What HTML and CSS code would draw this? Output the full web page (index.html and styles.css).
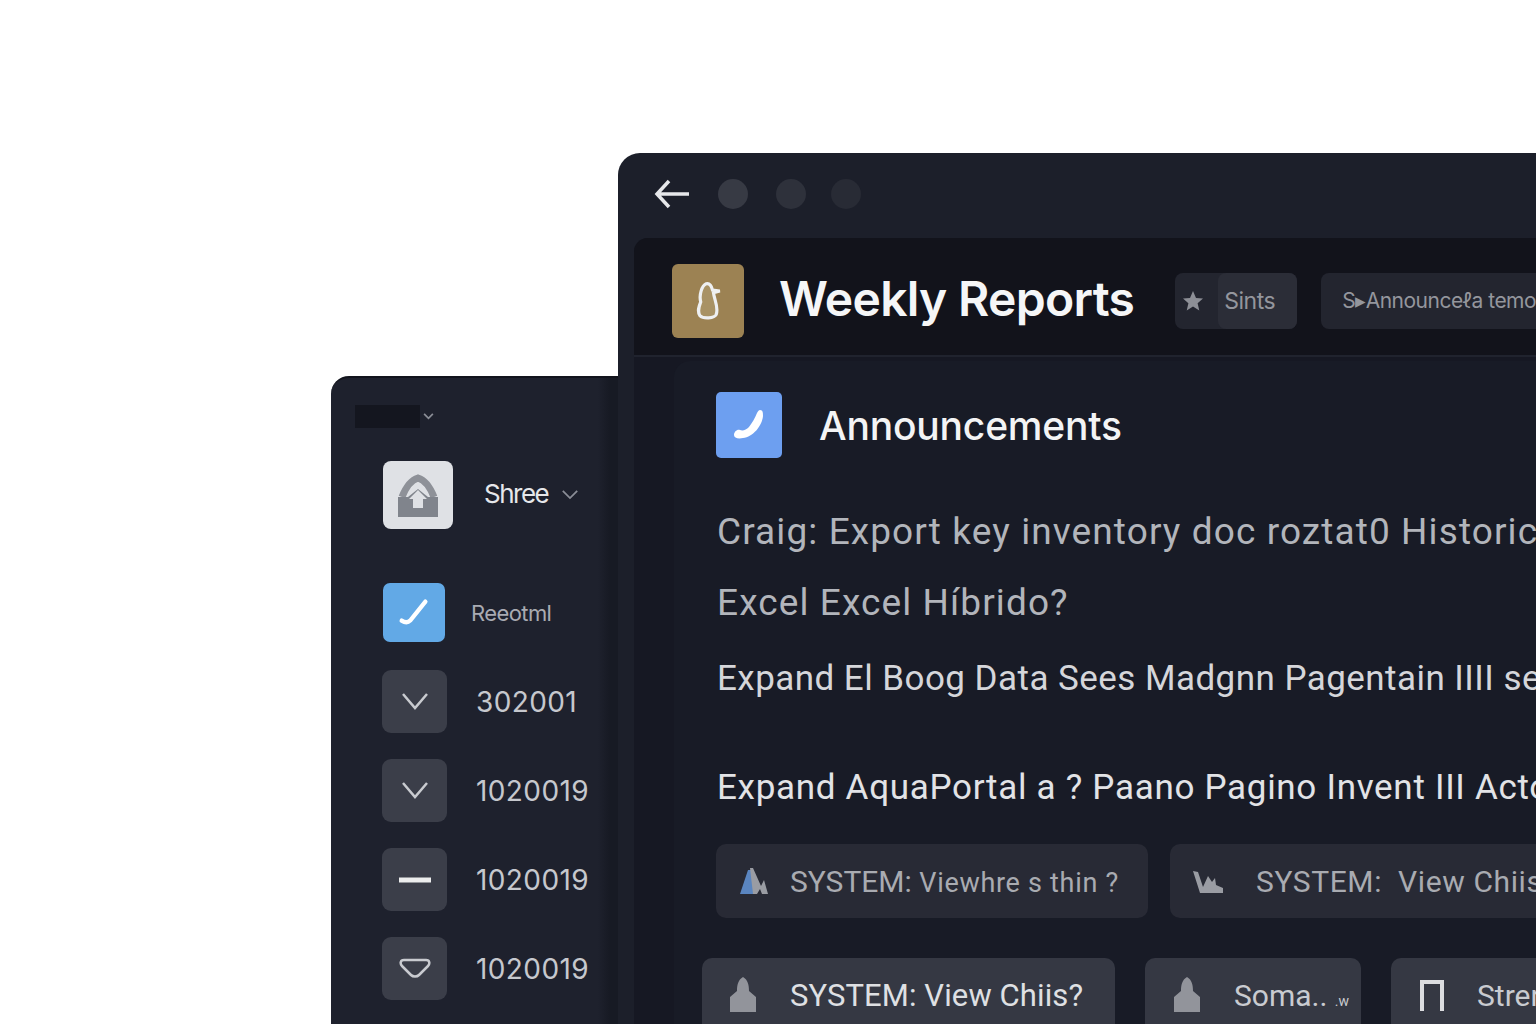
FILE: index.html
```html
<!DOCTYPE html>
<html lang="en">
<head>
  <meta charset="UTF-8">
  <title>Weekly Reports</title>
  <link rel="stylesheet" href="styles.css">
</head>
<body>
  <!-- Back window -->
  <div class="window window-back">
    <div class="side-top">
      <span class="side-dark"></span>
      <svg class="tiny-chevron" viewBox="0 0 12 8"><path d="M1 1l5 5 5-5"/></svg>
    </div>
    <div class="store-row">
      <div class="store-logo">
        <svg viewBox="0 0 40 44" width="40" height="44">
          <path class="home-roof" d="M4 24C8 14 13 7 20 5c7 2 12 9 16 19"/>
          <path class="home-base" d="M0 24h10l10-8 10 8h10v20H0z"/>
          <path class="home-arrow" d="M20 17l9 9h-4v9H15v-9h-4z"/>
        </svg>
      </div>
      <span class="store-name">Shree</span>
      <svg class="store-chevron" viewBox="0 0 20 12"><path d="M2 2l8 8 8-8"/></svg>
    </div>
    <div class="report-row">
      <div class="report-check">
        <svg viewBox="0 0 40 40" width="38" height="38"><path d="M7 28c3 2 6 3 9 0L32 8"/></svg>
      </div>
      <span class="report-name">Reeotml</span>
    </div>
    <div class="side-list">
      <div class="side-item">
        <div class="side-icon"><svg viewBox="0 0 32 32"><path d="M4 8l12 14L28 8"/></svg></div>
        <span class="side-num">302001</span>
      </div>
      <div class="side-item">
        <div class="side-icon"><svg viewBox="0 0 32 32"><path d="M4 8l12 14L28 8"/></svg></div>
        <span class="side-num">1020019</span>
      </div>
      <div class="side-item">
        <div class="side-icon"><svg viewBox="0 0 32 32"><path class="thick" d="M0 16h32"/></svg></div>
        <span class="side-num">1020019</span>
      </div>
      <div class="side-item">
        <div class="side-icon"><svg viewBox="0 0 32 32"><path d="M5 7h22c4 0 4 4 2 6l-9 9c-2 2-6 2-8 0l-9-9C1 11 1 7 5 7z"/></svg></div>
        <span class="side-num">1020019</span>
      </div>
    </div>
  </div>

  <!-- Front window -->
  <div class="window window-front">
    <div class="titlebar">
      <svg class="back-arrow" viewBox="0 0 36 30"><path d="M35 15H3M15 2 3 15l12 13"/></svg>
      <span class="dot dot-1"></span>
      <span class="dot dot-2"></span>
      <span class="dot dot-3"></span>
    </div>
    <div class="content">
      <div class="page-head">
        <div class="page-logo">
          <svg viewBox="0 0 30 44" width="30" height="40"><path d="M13 3c4-1 6 3 7 7l8 1-7 2c1 8 6 16 3 24-2 4-14 5-18 1-3-5-1-10 1-15C5 16 8 5 13 3z"/></svg>
        </div>
        <h1>Weekly Reports</h1>
        <div class="chip chip-star">
          <svg viewBox="0 0 24 24" width="24" height="24"><path d="M12 2l3 7 7 .6-5.400 4.600 1.700 7.200L12 17.600l-6.300 3.800 1.700-7.200L2 9.600 9 9z"/></svg>
          <span class="chip-inner">Sints</span>
        </div>
        <div class="chip chip-wide">S▸Announceℓa temo</div>
      </div>
      <div class="panel">
        <div class="panel-head">
          <div class="panel-icon">
            <svg viewBox="0 0 34 32" width="34" height="32"><path d="M28 1c3 0 3 3 3 6-1 10-10 21-20 22-5 1-9 0-9-3 0-3 3-6 6-5 3 1 6 0 9-3 3-4 6-9 8-14 1-2 2-3 3-3z"/></svg>
          </div>
          <h2>Announcements</h2>
        </div>
        <p class="line line-1">Craig: Export key inventory doc roztat0 Historic</p>
        <p class="line line-2">Excel Excel Híbrido?</p>
        <p class="line line-3">Expand El Boog Data Sees Madgnn Pagentain IIII se</p>
        <p class="line line-4">Expand AquaPortal a ? Paano Pagino Invent III Acto</p>
        <div class="btn-row btn-row-1">
          <div class="sys-btn sys-a">
            <svg viewBox="0 0 40 30" width="40" height="30"><path class="fill-blue" d="M1 28 9 4h3l3 24z"/><path class="fill-gray" d="M11 2h3l8 18 3-6 4 14h-6l-2-5-3 5h-4z"/></svg>
            <span class="sys-text">SYSTEM: <span class="sys-dim">Viewhre s thin ?</span></span>
          </div>
          <div class="sys-btn sys-b">
            <svg viewBox="0 0 34 24" width="34" height="24"><path class="fill-gray" d="M1 2l5 1 5 15 5-11 4 6 3-4 1 7 7 3v5H8z"/></svg>
            <span class="sys-text sys-spaced">SYSTEM:&nbsp; View Chiis</span>
          </div>
        </div>
        <div class="btn-row btn-row-2">
          <div class="sys-btn sys-c">
            <svg class="person" viewBox="0 0 30 36" width="30" height="36"><path d="M15 0c5 3 6 8 6 14l7 6v15H2V20l7-6C9 8 10 3 15 0z"/></svg>
            <span class="sys-text sys-bright">SYSTEM: View Chiis?</span>
          </div>
          <div class="sys-btn sys-d">
            <svg class="person" viewBox="0 0 30 36" width="30" height="36"><path d="M15 0c5 3 6 8 6 14l7 6v15H2V20l7-6C9 8 10 3 15 0z"/></svg>
            <span class="sys-text sys-small">Soma.. <span class="sys-tiny">.w</span></span>
          </div>
          <div class="sys-btn sys-e">
            <svg class="gate" viewBox="0 0 26 32" width="26" height="32"><path d="M3 32V3h20v29"/></svg>
            <span class="sys-text sys-small">Strer</span>
          </div>
        </div>
      </div>
    </div>
  </div>
</body>
</html>
```

FILE: styles.css
```css
* {
  margin: 0;
  padding: 0;
  box-sizing: border-box;
}

html, body {
  height: 100%;
}

body {
  position: relative;
  background-color: #fff;
  overflow: hidden;
  font-family: Inter, "Liberation Sans", sans-serif;
}

svg {
  display: block;
  flex-shrink: 0;
}

/* Windows */
.window {
  position: absolute;
  overflow: hidden;
}

.window-back {
  left: 331px;
  top: 376px;
  width: 290px;
  height: 648px;
  background: linear-gradient(to right, #1e212d 92%, #171a24 96%);
  border-radius: 18px 0 0 0;
  border-top: 2px solid #12141c;
  padding: 27px 0 0 24px;
}

.window-front {
  left: 618px;
  top: 153px;
  width: 918px;
  height: 871px;
  background-color: #1c1f2a;
  border-radius: 22px 0 0 0;
}

/* Back window */
.side-top {
  display: flex;
  align-items: center;
  gap: 3px;
  height: 23px;
}

.side-dark {
  width: 65px;
  height: 23px;
  background-color: #14161f;
}

.tiny-chevron {
  width: 11px;
  height: 7px;
}

.tiny-chevron path,
.store-chevron path {
  fill: none;
  stroke: #8a8d96;
  stroke-width: 2;
}

.store-row {
  display: flex;
  align-items: center;
  margin: 33px 0 0 28px;
  height: 68px;
}

.store-logo {
  width: 70px;
  height: 68px;
  flex-shrink: 0;
  background-color: #dfe1e5;
  border-radius: 8px;
  display: flex;
  align-items: center;
  justify-content: center;
}

.home-roof {
  fill: none;
  stroke: #8e9198;
  stroke-width: 7;
}

.home-base {
  fill: #80848c;
}

.home-arrow {
  fill: #dfe1e5;
}

.store-name {
  margin: 0 0 4px 31px;
  font-size: 26px;
  color: #e6e7ea;
  letter-spacing: -1.500px;
}

.store-chevron {
  width: 18px;
  height: 11px;
  margin: 0 0 2px 13px;
}

.report-row {
  display: flex;
  align-items: center;
  margin: 54px 0 0 28px;
  height: 59px;
}

.report-check {
  width: 62px;
  height: 59px;
  flex-shrink: 0;
  background-color: #62a9e6;
  border-radius: 7px;
  display: flex;
  align-items: center;
  justify-content: center;
}

.report-check path {
  fill: none;
  stroke: #fff;
  stroke-width: 4.500;
  stroke-linecap: round;
}

.report-name {
  margin-left: 26px;
  font-size: 22px;
  color: #a9abb2;
  letter-spacing: -0.6px;
}

.side-list {
  display: flex;
  flex-direction: column;
  margin-top: 28px;
}

.side-item {
  display: flex;
  align-items: center;
  height: 89px;
  margin-left: 27px;
  padding-bottom: 26px;
}

.side-icon {
  width: 65px;
  height: 63px;
  flex-shrink: 0;
  background-color: #3b3e49;
  border-radius: 9px;
  display: flex;
  align-items: center;
  justify-content: center;
}

.side-icon svg {
  width: 32px;
  height: 32px;
}

.side-icon path {
  fill: none;
  stroke: #c9cbd0;
  stroke-width: 2.500;
}

.side-icon path.thick {
  stroke: #eceded;
  stroke-width: 5;
}

.side-num {
  margin-left: 29px;
  font-size: 28px;
  color: #c6c8cd;
  letter-spacing: 0.4px;
}

/* Front window */
.titlebar {
  display: flex;
  align-items: center;
  height: 85px;
  padding: 0 0 4px 36px;
}

.back-arrow {
  width: 36px;
  height: 30px;
}

.back-arrow path {
  fill: none;
  stroke: #e6e7ea;
  stroke-width: 3.500;
}

.dot {
  width: 30px;
  height: 30px;
  border-radius: 50%;
}

.dot-1 {
  margin-left: 28px;
  background-color: #373a44;
}

.dot-2 {
  margin-left: 28px;
  background-color: #2e313b;
}

.dot-3 {
  margin-left: 25px;
  background-color: #282b35;
}

.content {
  height: 786px;
  margin-left: 16px;
  background-color: #161823;
  border-radius: 14px 0 0 0;
}

.page-head {
  display: flex;
  align-items: center;
  height: 119px;
  padding: 8px 0 0 38px;
  background-color: #12131b;
  border-bottom: 2px solid #20232e;
  border-radius: 14px 0 0 0;
}

.page-logo {
  width: 72px;
  height: 74px;
  flex-shrink: 0;
  background-color: #9c8253;
  border-radius: 6px;
  display: flex;
  align-items: center;
  justify-content: center;
}

.page-logo path {
  fill: #a89265;
  stroke: #eef0f2;
  stroke-width: 3.500;
}

.page-head h1 {
  margin: 0 0 4px 35px;
  font-size: 48px;
  font-weight: 600;
  color: #f5f6f7;
  letter-spacing: -0.7px;
  white-space: nowrap;
}

.chip {
  display: flex;
  align-items: center;
  flex-shrink: 0;
  height: 56px;
  background-color: #23252f;
  border-radius: 8px;
  color: #94969d;
  font-size: 23px;
  white-space: nowrap;
}

.chip-star {
  width: 122px;
  margin-left: 41px;
  padding-left: 6px;
}

.chip-star path {
  fill: #8d8f96;
}

.chip-inner {
  height: 56px;
  flex: 1;
  margin-left: 13px;
  padding-left: 6px;
  line-height: 56px;
  background-color: #2b2d37;
  border-radius: 8px;
  letter-spacing: -0.5px;
}

.chip-wide {
  width: 300px;
  margin-left: 24px;
  padding-left: 21px;
  font-size: 21px;
  letter-spacing: -0.5px;
}

.panel {
  height: 665px;
  margin: 4px 0 0 40px;
  padding: 31px 0 0 42px;
  background-color: #181b26;
  border-radius: 16px 0 0 0;
}

.panel-head {
  display: flex;
  align-items: center;
}

.panel-icon {
  width: 66px;
  height: 66px;
  flex-shrink: 0;
  background-color: #6d9ff0;
  border-radius: 5px;
  display: flex;
  align-items: center;
  justify-content: center;
}

.panel-icon path {
  fill: #fff;
}

.panel-head h2 {
  margin-left: 37px;
  font-size: 39px;
  font-weight: 500;
  color: #f3f4f5;
  letter-spacing: -0.2px;
}

.line {
  margin-left: 1px;
  white-space: nowrap;
  font-family: Roboto, "Liberation Sans", sans-serif;
  font-size: 37px;
  line-height: 44px;
  letter-spacing: 1.100px;
}

.line-1 {
  margin-top: 52px;
  color: #b2b5bb;
}

.line-2 {
  margin-top: 27px;
  color: #b2b5bb;
}

.line-3 {
  margin-top: 32px;
  font-size: 35px;
  letter-spacing: 0.45px;
  color: #d5d6da;
}

.line-4 {
  margin-top: 65px;
  font-size: 35px;
  letter-spacing: 0.7px;
  color: #e2e3e6;
}

/* Buttons */
.btn-row {
  display: flex;
}

.btn-row-1 {
  margin-top: 34px;
  gap: 22px;
}

.btn-row-2 {
  margin: 40px 0 0 -14px;
  gap: 30px;
}

.sys-btn {
  display: flex;
  align-items: center;
  flex-shrink: 0;
  height: 74px;
  background-color: #282a35;
  border-radius: 10px;
  white-space: nowrap;
}

.btn-row-2 .sys-btn {
  height: 80px;
  background-color: #353843;
  padding-bottom: 6px;
}

.sys-a {
  width: 432px;
  padding-left: 23px;
}

.sys-b {
  width: 500px;
  padding-left: 22px;
}

.sys-c {
  width: 413px;
  padding-left: 26px;
}

.sys-d {
  width: 216px;
  padding-left: 27px;
}

.sys-e {
  width: 240px;
  padding-left: 28px;
}

.fill-blue {
  fill: #5a85c0;
}

.fill-gray {
  fill: #9a9ca3;
}

.person path {
  fill: #92949b;
}

.gate path {
  fill: none;
  stroke: #dcdde0;
  stroke-width: 4;
}

.sys-text {
  margin-left: 11px;
  font-family: Roboto, "Liberation Sans", sans-serif;
  font-size: 30px;
  color: #a9abb1;
}

.sys-dim {
  font-size: 27px;
  letter-spacing: 0.7px;
}

.sys-spaced {
  margin-left: 30px;
  letter-spacing: 0.6px;
}

.sys-bright {
  margin-left: 32px;
  font-size: 31px;
  letter-spacing: 0.1px;
  color: #dfe0e3;
}

.sys-small {
  margin-left: 32px;
  color: #c9cbd0;
}

.sys-tiny {
  font-size: 14px;
}
```
